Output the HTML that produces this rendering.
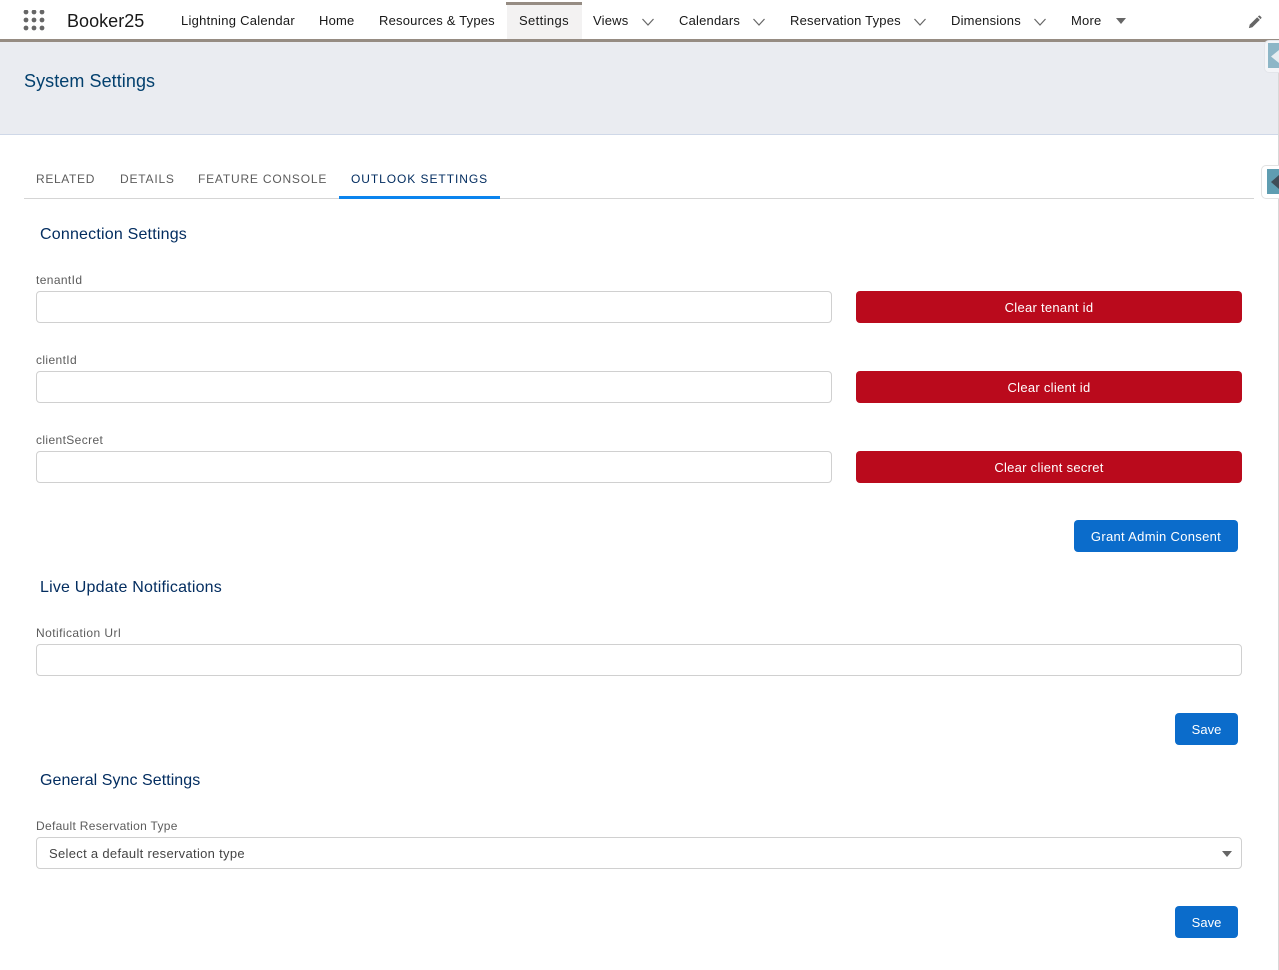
<!DOCTYPE html>
<html lang="en">
<head>
<meta charset="utf-8">
<title>System Settings</title>
<style>
html,body{margin:0;padding:0;background:#fff;}
body{position:relative;width:1279px;height:970px;overflow:hidden;font-family:"Liberation Sans",Arial,sans-serif;font-size:13px;color:#181818;}
.a{position:absolute;white-space:nowrap;}
.nav{top:12px;line-height:17px;font-size:13px;color:#181818;letter-spacing:.2px;}
.tab{top:171px;line-height:16px;font-size:12px;color:#5c5c5c;}
.h{left:40px;font-size:16px;line-height:20px;color:#032d60;}
.lb{left:36px;font-size:12px;line-height:16px;color:#5c5c5c;letter-spacing:.38px;}
.in{box-sizing:border-box;border:1px solid #d0d0d0;border-radius:4px;background:#fff;height:32px;}
.btn{border-radius:4px;color:#fff;text-align:center;height:32px;line-height:33px;font-size:13px;letter-spacing:.28px;}
.r{background:#ba0a1c;left:856px;width:386px;}
.b{background:#0b6ccb;}
</style>
</head>
<body>
<div class="a" style="left:0;top:39px;width:1279px;height:3px;background:#968c83;"></div>
<div class="a" style="left:0;top:42px;width:1278px;height:92px;background:#eaecf1;"></div>
<div class="a" style="left:0;top:134px;width:1278px;height:1px;background:#cfd8e8;"></div>
<div class="a" style="left:1278px;top:42px;width:1px;height:928px;background:#d8d8d8;"></div>

<svg class="a" style="left:23px;top:10px" width="24" height="22" viewBox="0 0 24 22" fill="#666">
<circle cx="3" cy="2" r="2.4"/><circle cx="11" cy="2" r="2.4"/><circle cx="19" cy="2" r="2.4"/>
<circle cx="3" cy="10" r="2.4"/><circle cx="11" cy="10" r="2.4"/><circle cx="19" cy="10" r="2.4"/>
<circle cx="3" cy="18" r="2.4"/><circle cx="11" cy="18" r="2.4"/><circle cx="19" cy="18" r="2.4"/>
</svg>
<div class="a" style="left:67px;top:10px;font-size:18px;line-height:22px;color:#181818;letter-spacing:.03px;">Booker25</div>

<div class="a" style="left:507px;top:2px;width:75px;height:37px;background:#f3f2f2;"></div>
<div class="a" style="left:506px;top:2px;width:76px;height:3px;background:#968c83;"></div>

<div class="a nav" style="left:181px;letter-spacing:.27px;">Lightning Calendar</div>
<div class="a nav" style="left:319px;">Home</div>
<div class="a nav" style="left:379px;">Resources &amp; Types</div>
<div class="a nav" style="left:519px;letter-spacing:.37px;">Settings</div>
<div class="a nav" style="left:593px;">Views</div>
<div class="a nav" style="left:679px;">Calendars</div>
<div class="a nav" style="left:790px;">Reservation Types</div>
<div class="a nav" style="left:951px;">Dimensions</div>
<div class="a nav" style="left:1071px;">More</div>

<svg class="a" style="left:641px;top:17px" width="14" height="10" viewBox="0 0 14 10" fill="none" stroke="#666" stroke-width="1.2"><path d="M1.5 2 7 8 12.5 2"/></svg>
<svg class="a" style="left:752px;top:17px" width="14" height="10" viewBox="0 0 14 10" fill="none" stroke="#666" stroke-width="1.2"><path d="M1.5 2 7 8 12.5 2"/></svg>
<svg class="a" style="left:913px;top:17px" width="14" height="10" viewBox="0 0 14 10" fill="none" stroke="#666" stroke-width="1.2"><path d="M1.5 2 7 8 12.5 2"/></svg>
<svg class="a" style="left:1033px;top:17px" width="14" height="10" viewBox="0 0 14 10" fill="none" stroke="#666" stroke-width="1.2"><path d="M1.5 2 7 8 12.5 2"/></svg>
<svg class="a" style="left:1115px;top:17px" width="12" height="8" viewBox="0 0 12 8" fill="#666"><path d="M1 1h10L6 7z"/></svg>
<svg class="a" style="left:1248px;top:15px" width="14" height="14" viewBox="0 0 16 16" fill="#666"><path d="M1 15 2 11 10.5 2.5 13.5 5.5 5 14z"/><path d="M11.3 1.7 12.3.8a1 1 0 0 1 1.3 0l1.6 1.6a1 1 0 0 1 0 1.3l-.9 1z"/></svg>

<div class="a" style="left:24px;top:70px;font-size:18px;line-height:22px;color:#03406e;letter-spacing:.07px;">System Settings</div>

<div class="a" style="left:1264px;top:40px;width:15px;height:33px;background:#f4f5f8;border:1px solid #e3e5ea;border-right:0;border-radius:5px 0 0 5px;box-sizing:border-box;"></div>
<div class="a" style="left:1268px;top:43px;width:11px;height:25px;background:#8db6c7;"></div>
<svg class="a" style="left:1271px;top:50px" width="8" height="13" viewBox="0 0 8 13"><path d="M8 0v13L0 6.5z" fill="#e6edf1"/></svg>
<div class="a" style="left:1261px;top:165px;width:18px;height:34px;background:#fff;border:1px solid #e2e2e2;border-right:0;border-radius:5px 0 0 5px;box-sizing:border-box;"></div>
<div class="a" style="left:1267px;top:169px;width:12px;height:25px;background:#5f9db1;"></div>
<svg class="a" style="left:1271px;top:175px" width="8" height="14" viewBox="0 0 8 14"><path d="M8 0v14L0 7z" fill="#3f4d57"/></svg>

<div class="a tab" style="left:36px;letter-spacing:.65px;">RELATED</div>
<div class="a tab" style="left:120px;letter-spacing:.8px;">DETAILS</div>
<div class="a tab" style="left:198px;letter-spacing:.8px;">FEATURE CONSOLE</div>
<div class="a tab" style="left:351px;color:#032d60;letter-spacing:.94px;">OUTLOOK SETTINGS</div>
<div class="a" style="left:24px;top:198px;width:1230px;height:1px;background:#d5d5d5;"></div>
<div class="a" style="left:339px;top:196px;width:161px;height:3px;background:#0a84ee;"></div>

<div class="a h" style="top:225px;letter-spacing:.2px;">Connection Settings</div>
<div class="a lb" style="top:272px;">tenantId</div>
<div class="a in" style="left:36px;top:291px;width:796px;"></div>
<div class="a btn r" style="top:291px;">Clear tenant id</div>
<div class="a lb" style="top:352px;">clientId</div>
<div class="a in" style="left:36px;top:371px;width:796px;"></div>
<div class="a btn r" style="top:371px;">Clear client id</div>
<div class="a lb" style="top:432px;">clientSecret</div>
<div class="a in" style="left:36px;top:451px;width:796px;"></div>
<div class="a btn r" style="top:451px;">Clear client secret</div>
<div class="a btn b" style="left:1074px;top:520px;width:164px;letter-spacing:.31px;">Grant Admin Consent</div>

<div class="a h" style="top:578px;letter-spacing:.2px;">Live Update Notifications</div>
<div class="a lb" style="top:625px;letter-spacing:.44px;">Notification Url</div>
<div class="a in" style="left:36px;top:644px;width:1206px;"></div>
<div class="a btn b" style="left:1175px;top:713px;width:63px;letter-spacing:0;">Save</div>

<div class="a h" style="top:771px;letter-spacing:.05px;">General Sync Settings</div>
<div class="a lb" style="top:818px;letter-spacing:.3px;">Default Reservation Type</div>
<div class="a in" style="left:36px;top:837px;width:1206px;"></div>
<div class="a" style="left:49px;top:845px;font-size:13px;line-height:17px;color:#444;letter-spacing:.31px;">Select a default reservation type</div>
<svg class="a" style="left:1221px;top:850px" width="12" height="8" viewBox="0 0 12 8" fill="#666"><path d="M1 1h10L6 7z"/></svg>
<div class="a btn b" style="left:1175px;top:906px;width:63px;letter-spacing:0;">Save</div>
</body>
</html>
